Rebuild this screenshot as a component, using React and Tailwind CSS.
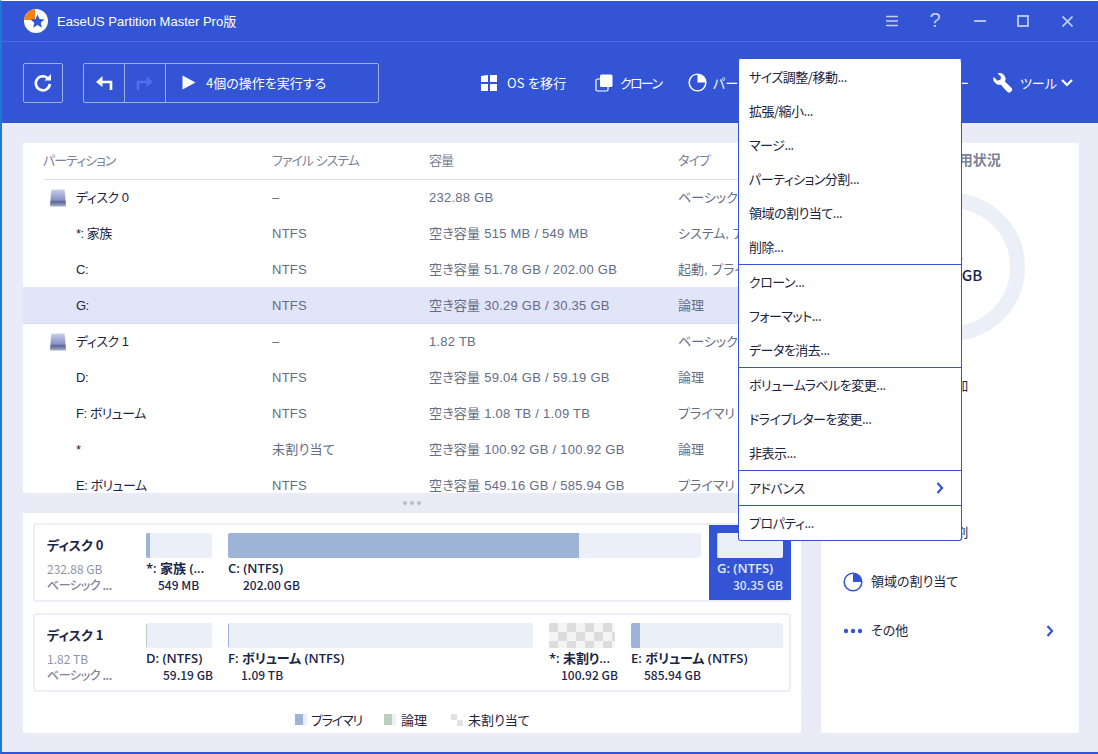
import React from "react";

const FONT = "font-['Noto_Sans_CJK_JP','Noto_Sans',sans-serif] [font-feature-settings:'palt']";
const LATIN = "font-['Liberation_Sans','Noto_Sans_CJK_JP',sans-serif]";

function Logo() {
  return (
    <svg width="26" height="26" viewBox="0 0 26 26" className="shrink-0">
      <circle cx="13" cy="13" r="12" fill="#fff" />
      <path d="M1 12 A12 12 0 0 1 12 1 L12 12 Z" fill="#f5820f" />
      <path d="M14.500 6.500l2 4.600 5 .4-3.800 3.300 1.200 4.900-4.400-2.600-4.300 2.600 1.100-4.900-3.700-3.300 5-.4z" fill="#3355d5" />
    </svg>
  );
}

function DiskIcon() {
  return (
    <svg width="16" height="18" viewBox="0 0 16 18" className="shrink-0">
      <defs>
        <linearGradient id="dk" x1="0" y1="0" x2="0" y2="1">
          <stop offset="0" stopColor="#c9d0ea" />
          <stop offset="0.62" stopColor="#8792c4" />
          <stop offset="0.72" stopColor="#5a6596" />
          <stop offset="1" stopColor="#a7afcf" />
        </linearGradient>
      </defs>
      <path d="M2.500 0.500h11q1 0 1.200 1L16 16q0 1.500-1.500 1.500h-13Q0 17.500 0 16L1.300 1.500q.2-1 1.200-1z" fill="url(#dk)" />
    </svg>
  );
}

function Pie({ size = 20, color = "#fff" }) {
  return (
    <svg width={size} height={size} viewBox="0 0 20 20" className="shrink-0">
      <circle cx="10" cy="10" r="8.800" fill="none" stroke={color} strokeWidth="1.500" />
      <path d="M10 1v9h9a9 9 0 0 0-9-9z" fill={color} />
    </svg>
  );
}

function Chevron({ color = "#3355d5" }) {
  return (
    <svg width="8" height="12" viewBox="0 0 8 12">
      <path d="M1.500 1l4.500 5-4.500 5" fill="none" stroke={color} strokeWidth="2.200" />
    </svg>
  );
}

function TitleBar() {
  return (
    <div className="flex h-[41px] items-center border-b border-[#4c6be2] pl-[21px]">
      <Logo />
      <span className={`ml-[8px] pt-[2px] text-[13px] text-white ${LATIN}`}>EaseUS Partition Master Pro版</span>
      <div className="ml-auto flex items-center text-[#c3cef2]">
        <svg width="12" height="12" viewBox="0 0 12 12" className="mr-[30px]">
          <path d="M0 1.500h12M0 6h12M0 10.500h12" stroke="currentColor" strokeWidth="1.600" />
        </svg>
        <span className={`mr-[32px] w-[14px] pb-[2px] text-center text-[20px] leading-none ${LATIN}`}>?</span>
        <svg width="12" height="12" viewBox="0 0 12 12" className="mr-[31px]">
          <path d="M0 6h12" stroke="currentColor" strokeWidth="1.800" />
        </svg>
        <svg width="12" height="12" viewBox="0 0 12 12" className="mr-[33px]">
          <rect x="1" y="1" width="10" height="10" fill="none" stroke="currentColor" strokeWidth="1.800" />
        </svg>
        <svg width="11" height="11" viewBox="0 0 11 11" className="mr-[25px]">
          <path d="M0.500 0.500l10 10M10.500 0.500l-10 10" stroke="currentColor" strokeWidth="1.700" />
        </svg>
      </div>
    </div>
  );
}

function ToolItem({ icon, children, className = "", gap = "gap-[9px]" }) {
  return (
    <div className={`flex items-center text-[13px] text-white ${gap} ${className}`}>
      {icon}
      <span className="whitespace-nowrap">{children}</span>
    </div>
  );
}

function Toolbar() {
  return (
    <div className="flex h-[81px] items-center pl-[21px]">
      <div className="flex h-[40px] w-[40px] items-center justify-center rounded-[2px] border border-[#9eaeea]">
        <svg width="18" height="18" viewBox="0 0 18 18">
          <path d="M14.500 5.200A7 7 0 1 0 15.800 10" fill="none" stroke="#fff" strokeWidth="2.600" />
          <path d="M10.500 6.500h6.500V0z" fill="#fff" />
        </svg>
      </div>
      <div className="ml-[20px] flex h-[40px] w-[296px] items-center rounded-[2px] border border-[#9eaeea]">
        <div className="flex h-full w-[41px] items-center justify-center border-r border-[#9eaeea]">
          <svg width="18" height="16" viewBox="0 0 18 16">
            <path d="M16 15V7H5" fill="none" stroke="#fff" strokeWidth="2.600" />
            <path d="M7.500 1L1 7l6.500 5z" fill="#fff" />
          </svg>
        </div>
        <div className="flex h-full w-[41px] items-center justify-center border-r border-[#9eaeea]">
          <svg width="18" height="16" viewBox="0 0 18 16">
            <path d="M2 15V7h11" fill="none" stroke="#4f70ea" strokeWidth="2.600" />
            <path d="M10.500 1L17 7l-6.500 5z" fill="#4f70ea" />
          </svg>
        </div>
        <svg width="14" height="15" viewBox="0 0 14 15" className="ml-[16px]">
          <path d="M0.500 0.500L13.500 7.500 0.500 14.500z" fill="#fff" />
        </svg>
        <span className="ml-[10px] whitespace-nowrap text-[13px] text-white">4個の操作を実行する</span>
      </div>
      <div className="ml-[102px] flex w-[87px] shrink-0">
        <ToolItem
          gap="gap-[10px]"
          icon={
            <svg width="16" height="16" viewBox="0 0 16 16" className="shrink-0">
              <path d="M0 1l7-1v7H0zM9 0l7 0v7H9zM0 9h7v7H0zM9 9h7v7H9z" fill="#fff" />
            </svg>
          }
        >
          <span className="tracking-[0.2px]">OS を移行</span>
        </ToolItem>
      </div>
      <div className="ml-[27px] flex w-[66px] shrink-0">
        <ToolItem
          gap="gap-[7px]"
          icon={
            <svg width="18" height="18" viewBox="0 0 18 18" className="shrink-0">
              <rect x="1" y="5" width="12" height="12" rx="1.500" fill="none" stroke="#fff" strokeWidth="1.200" />
              <rect x="5" y="0.500" width="12.500" height="12.500" rx="1.500" fill="#fff" />
            </svg>
          }
        >
          <span className="tracking-[-1.700px]">クローン</span>
        </ToolItem>
      </div>
      <div className="ml-[27px] flex w-[281px] shrink-0 items-center">
        <ToolItem gap="gap-[6px]" icon={<Pie size={19} />}>
          パーティション
        </ToolItem>
        <span className="ml-auto text-[13px] text-white">ー</span>
      </div>
      <ToolItem
        className="ml-[24px]"
        gap="gap-[7px]"
        icon={
          <svg width="20" height="20" viewBox="0 0 20 20" className="shrink-0">
            <g transform="translate(20 0) scale(-1 1)">
              <path
                d="M19.500 5.500a6 6 0 0 1-7.500 5.800L6 18.300q-1.700 1.700-3.700.4-2-1.600-.5-3.800l6.600-6.200A6 6 0 0 1 15 .2L11.500 4l.8 3.300 3.300.8 3.400-3.500z"
                fill="#fff"
                stroke="#fff"
                strokeWidth="0.800"
              />
            </g>
          </svg>
        }
      >
        ツール
      </ToolItem>
      <svg width="12" height="8" viewBox="0 0 12 8" className="ml-[4px]">
        <path d="M1 1l5 5 5-5" fill="none" stroke="#fff" strokeWidth="2.200" />
      </svg>
    </div>
  );
}

const rows = [
  { disk: true, name: "ディスク 0", fs: "–", cap: "232.88 GB", type: "ベーシック, MBR" },
  { name: "*: 家族", fs: "NTFS", cap: "空き容量 515 MB / 549 MB", type: "システム, アクティブ" },
  { name: "C:", fs: "NTFS", cap: "空き容量 51.78 GB / 202.00 GB", type: "起動, プライマリ" },
  { name: "G:", fs: "NTFS", cap: "空き容量 30.29 GB / 30.35 GB", type: "論理", sel: true },
  { disk: true, name: "ディスク 1", fs: "–", cap: "1.82 TB", type: "ベーシック, GPT" },
  { name: "D:", fs: "NTFS", cap: "空き容量 59.04 GB / 59.19 GB", type: "論理" },
  { name: "F: ボリューム", fs: "NTFS", cap: "空き容量 1.08 TB / 1.09 TB", type: "プライマリ" },
  { name: "*", fs: "未割り当て", cap: "空き容量 100.92 GB / 100.92 GB", type: "論理" },
  { name: "E: ボリューム", fs: "NTFS", cap: "空き容量 549.16 GB / 585.94 GB", type: "プライマリ" },
];

function PartitionTable() {
  return (
    <div className={`h-[350px] overflow-hidden bg-white ${LATIN}`}>
      <div className="mb-[-1px] ml-[20px] grid h-[37px] grid-cols-[229px_157px_249px_1fr] items-center border-b border-[#dcdfec] text-[13px] tracking-[-1px] text-[#7c8298]">
        <span>パーティション</span>
        <span>ファイル システム</span>
        <span>容量</span>
        <span>タイプ</span>
      </div>
      {rows.map((r) => (
        <div
          key={r.name}
          className={`grid grid-cols-[249px_157px_249px_1fr] items-center pt-[2px] text-[13px] ${
            r.sel ? "mb-[-1px] h-[37px] border-b border-[#d8dcee] bg-[#e0e5f7]" : "h-[36px]"
          }`}
        >
          <div className="flex items-center pl-[27px] tracking-[-0.5px] text-[#1c2440]">
            <span className="w-[26px] shrink-0">{r.disk && <DiskIcon />}</span>
            <span>{r.name}</span>
          </div>
          <span className="tracking-[0.25px] text-[#656c85]">{r.fs}</span>
          <span className="whitespace-nowrap tracking-[0.25px] text-[#656c85]">{r.cap}</span>
          <span className="whitespace-nowrap text-[#656c85]">{r.type}</span>
        </div>
      ))}
    </div>
  );
}

function Block({ w, fill, fillColor = "#9db4d6", label, size, pad, ml = 16, checker, selected }) {
  return (
    <div
      className={`flex shrink-0 flex-col ${selected ? "w-[82px] self-stretch bg-[#3355d5] px-[8px] pt-[8px]" : ""}`}
      style={selected ? { marginLeft: ml } : { width: w, marginLeft: ml }}
    >
      <div className="relative h-[25px] overflow-hidden rounded-[2px] bg-[#ebeff8]">
        {checker ? (
          <div className="h-full w-full bg-[conic-gradient(#f4f4f4_25%,#dcdcdc_0_50%,#f4f4f4_0_75%,#dcdcdc_0)] bg-[length:18px_18px]" />
        ) : (
          <div className="h-full" style={{ width: fill, background: fillColor }} />
        )}
      </div>
      <span
        className={`mt-[1px] h-[18px] whitespace-nowrap font-['Open_Sans','Noto_Sans_CJK_JP',sans-serif] text-[13px] font-semibold leading-[18px] ${
          selected ? "text-[#e3e8fb]" : "text-[#1a2547]"
        }`}
      >
        {label}
      </span>
      <span
        className={`h-[16px] whitespace-nowrap text-[12px] font-medium leading-[16px] ${
          selected ? "text-[#e3e8fb]" : "text-[#1a2547]"
        }`}
        style={{ paddingLeft: pad }}
      >
        {size}
      </span>
    </div>
  );
}

function DiskCard({ name, cap, children, className = "" }) {
  return (
    <div className={`flex h-[79px] items-stretch rounded-[3px] border-2 border-[#ebeff8] ${className}`}>
      <div className="flex w-[95px] shrink-0 flex-col pl-[12px] pt-[9px]">
        <span className="h-[22px] text-[13px] font-bold leading-[22px] text-[#1a2547]">{name}</span>
        <span className="mt-[5px] h-[16px] text-[12px] leading-[16px] text-[#9095a8]">{cap}</span>
        <span className="h-[16px] whitespace-nowrap text-[12px] font-medium leading-[16px] tracking-[-0.4px] text-[#7c8298]">ベーシック ...</span>
      </div>
      {children}
    </div>
  );
}

function DiskMap() {
  return (
    <div className="flex h-[220px] flex-col bg-white px-[10px] pt-[10px]">
      <DiskCard name="ディスク 0" cap="232.88 GB">
        <div className="flex flex-1 pt-[8px]">
          <Block ml={16} w={66} fill={4} label="*: 家族 (..." size="549 MB" pad={12} />
          <Block w={473} fill={351} label="C: (NTFS)" size="202.00 GB" pad={15} />
          <div className="mt-[-8px] flex">
            <Block ml={8} selected fill={1} fillColor="#c8cfe4" label="G: (NTFS)" size="30.35 GB" pad={16} />
          </div>
        </div>
      </DiskCard>
      <DiskCard name="ディスク 1" cap="1.82 TB" className="mt-[11px]">
        <div className="flex flex-1 pt-[8px]">
          <Block ml={16} w={66} fill={1} fillColor="#b9d0bd" label="D: (NTFS)" size="59.19 GB" pad={17} />
          <Block w={305} fill={1} label="F: ボリューム (NTFS)" size="1.09 TB" pad={13} />
          <Block w={66} checker label="*: 未割り..." size="100.92 GB" pad={12} />
          <Block w={152} fill={9} label="E: ボリューム (NTFS)" size="585.94 GB" pad={13} />
        </div>
      </DiskCard>
      <div className="mt-[18px] flex items-center pl-[262px] text-[13px] text-[#1c2440]">
        <span className="h-[11px] w-[12px] shrink-0 border-r-4 border-[#ebeff8] bg-[#9db4d6]" />
        <span className="ml-[4px] w-[51px] whitespace-nowrap tracking-[-1.200px]">プライマリ</span>
        <span className="ml-[22px] h-[11px] w-[12px] shrink-0 border-r-4 border-[#ebeff8] bg-[#b9d0bd]" />
        <span className="ml-[5px] w-[27px] whitespace-nowrap">論理</span>
        <span className="ml-[23px] h-[12px] w-[12px] shrink-0 bg-[conic-gradient(#ffffff_25%,#e2e2e2_0_50%,#ffffff_0_75%,#e2e2e2_0)]" />
        <span className="ml-[5px] whitespace-nowrap">未割り当て</span>
      </div>
    </div>
  );
}

function SideRow({ icon, children, right, tight }) {
  return (
    <div className="flex h-[49px] items-center pl-[22px] text-[13px] text-[#1c2440]">
      <span className="flex w-[28px] shrink-0 items-center">{icon}</span>
      <span className={`whitespace-nowrap pb-[2px] ${tight ? "tracking-[-1px]" : ""}`}>{children}</span>
      {right && <span className="ml-auto mr-[25px] flex">{right}</span>}
    </div>
  );
}

function SidePanel() {
  return (
    <div className="ml-[20px] flex w-[258px] flex-col rounded-[2px] bg-white">
      <div className="flex h-[35px] items-center pb-[2px] pl-[22px] text-[14px] font-bold text-[#7c8298]">
        パーティションの使用状況
      </div>
      <div className="flex justify-center pl-[2px] pt-[15px]">
        <div className="flex h-[148px] w-[148px] flex-col items-center justify-center rounded-full border-[15px] border-[#ebeff8] pb-[3px] text-[15px] font-medium leading-[18px] text-[#1a2547]">
          <span>G: -</span>
          <span>30.35 GB</span>
        </div>
      </div>
      <div className="mt-[20px]">
        <SideRow tight>パーティション追加</SideRow>
        <SideRow>サイズ調整</SideRow>
        <SideRow>クローン</SideRow>
        <SideRow tight>パーティション分割</SideRow>
        <SideRow icon={<Pie size={20} color="#3355d5" />}>領域の割り当て</SideRow>
        <SideRow
          icon={
            <svg width="20" height="6" viewBox="0 0 20 6">
              <circle cx="3" cy="3" r="2.200" fill="#3355d5" />
              <circle cx="10" cy="3" r="2.200" fill="#3355d5" />
              <circle cx="17" cy="3" r="2.200" fill="#3355d5" />
            </svg>
          }
          right={<Chevron />}
        >
          その他
        </SideRow>
      </div>
    </div>
  );
}

function MenuItem({ children, right }) {
  return (
    <div className="flex h-[34px] items-center justify-between pl-[10px] pr-[17px] text-[13px] tracking-[-0.5px] text-[#1c2440]">
      <span className="pb-[1px]">{children}</span>
      {right}
    </div>
  );
}

function Menu() {
  const sections = [
    ["サイズ調整/移動...", "拡張/縮小...", "マージ...", "パーティション分割...", "領域の割り当て...", "削除..."],
    ["クローン...", "フォーマット...", "データを消去..."],
    ["ボリュームラベルを変更...", "ドライブレターを変更...", "非表示..."],
  ];
  return (
    <div className="absolute left-[736px] top-[58px] w-[224px] rounded-[3px] border border-[#3355d5] border-t-white bg-white">
      {sections.map((s) => (
        <div key={s[0]} className="border-b border-[#3355d5]">
          {s.map((t) => (
            <MenuItem key={t}>{t}</MenuItem>
          ))}
        </div>
      ))}
      <div className="border-b border-[#3355d5]">
        <MenuItem right={<Chevron />}>アドバンス</MenuItem>
      </div>
      <MenuItem>プロパティ...</MenuItem>
    </div>
  );
}

export default function App() {
  return (
    <div
      className={`relative h-[754px] w-[1098px] overflow-hidden border-b-2 border-l-2 border-t border-b-[#3355d5] border-l-[#1f78d8] border-t-white bg-[#e9ecf7] ${FONT}`}
    >
      <div className="h-[122px] bg-[#3355d5]">
        <TitleBar />
        <Toolbar />
      </div>
      <div className="flex pl-[21px] pt-[20px]">
        <div className="flex w-[778px] flex-col">
          <PartitionTable />
          <div className="flex h-[20px] items-center justify-center gap-[3px]">
            <span className="h-[4px] w-[4px] rounded-full bg-[#b9bcc8]" />
            <span className="h-[4px] w-[4px] rounded-full bg-[#b9bcc8]" />
            <span className="h-[4px] w-[4px] rounded-full bg-[#b9bcc8]" />
          </div>
          <DiskMap />
        </div>
        <SidePanel />
      </div>
      <Menu />
    </div>
  );
}
